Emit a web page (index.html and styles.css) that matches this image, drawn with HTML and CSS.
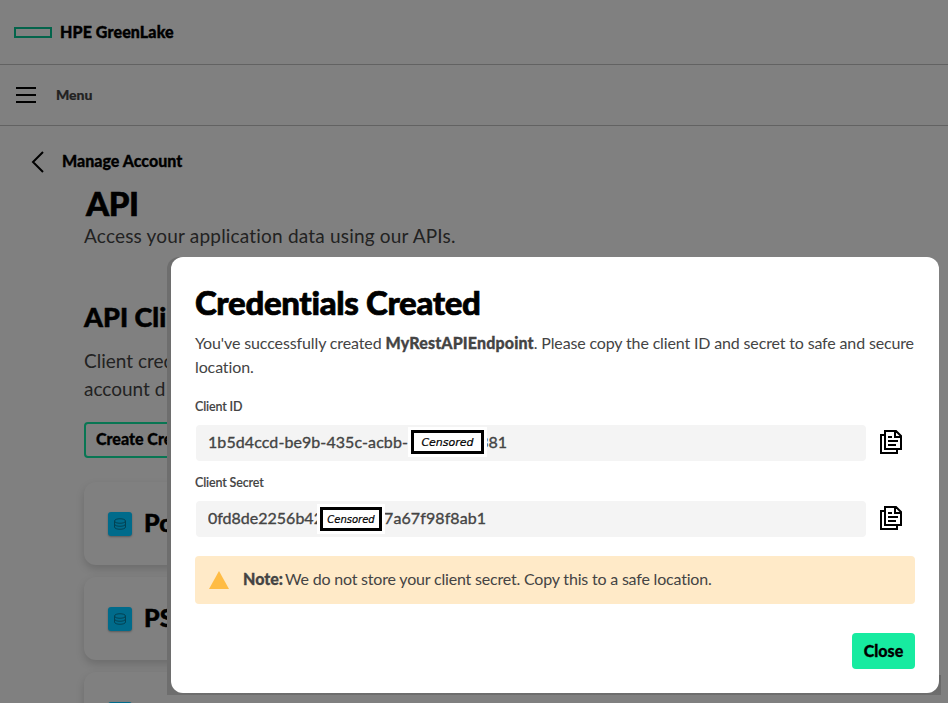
FILE: index.html
```html
<!DOCTYPE html>
<html lang="en">
<head>
<meta charset="utf-8">
<title>HPE GreenLake</title>
<link rel="stylesheet" href="styles.css">
</head>
<body>
<svg width="0" height="0" class="defs">
  <symbol id="copy" viewBox="0 0 22 24"><path d="M5 1h11l5 5v13H5zM15 1v6h6M5 5H1v18h16v-4M8 7h4M8 11h10M8 15h8" fill="none" stroke="#000" stroke-width="2"/></symbol>
  <symbol id="db" viewBox="0 0 24 24"><path d="M6.500 9c0-3 11-3 11 0v6c0 3-11 3-11 0zM6.500 9c0 3 11 3 11 0M6.500 12c0 3 11 3 11 0" fill="none" stroke="#034253" stroke-width="1"/></symbol>
</svg>
<div class="page">
  <header class="brand"><span class="logo"></span><span class="brand-name">HPE GreenLake</span></header>
  <nav class="menu"><span class="burger"><i></i><i></i><i></i></span><span class="menu-label">Menu</span></nav>
  <main>
    <div class="back"><svg width="14" height="22" viewBox="0 0 14 22"><path d="M12 1L2 11l10 10" fill="none" stroke="#000" stroke-width="2"/></svg><span>Manage Account</span></div>
    <h1>API</h1>
    <p class="intro">Access your application data using our APIs.</p>
    <section class="clients">
      <h2>API Cli</h2>
      <p class="desc"><span class="d1">Client cred</span><br><span class="d2">account d</span></p>
      <div class="create">Create Cre</div>
      <div class="card"><span class="tile"><svg width="24" height="24"><use href="#db"/></svg></span><b>Po</b></div>
      <div class="card"><span class="tile"><svg width="24" height="24"><use href="#db"/></svg></span><b>PS</b></div>
      <div class="card"><span class="tile"></span></div>
    </section>
  </main>
</div>
<div class="frame">
  <div class="modal">
    <h2 class="title">Credentials Created</h2>
    <p class="message"><span class="m1">You've successfully created </span><b class="m2">MyRestAPIEndpoint</b><span class="m3">. Please copy the client ID and secret to safe and secure</span><br><span class="m1">location.</span></p>
    <div class="label l1">Client ID</div>
    <div class="row">
      <div class="field"><span class="v1">1b5d4ccd-be9b-435c-acbb-</span><span class="censor c1">Censored</span><span class="v2"><span>381</span></span></div>
      <svg width="22" height="24"><use href="#copy"/></svg>
    </div>
    <div class="label l2">Client Secret</div>
    <div class="row">
      <div class="field"><span class="v3">0fd8de2256b42</span><span class="censor c2">Censored</span><span class="v4">7a67f98f8ab1</span></div>
      <svg width="22" height="24"><use href="#copy"/></svg>
    </div>
    <div class="note"><svg width="20" height="18" viewBox="0 0 20 18"><path d="M10 0l10 18H0z" fill="#ffbc44"/></svg><b>Note:</b><span class="note-text">We do not store your client secret. Copy this to a safe location.</span></div>
    <div class="actions"><button>Close</button></div>
  </div>
</div>
</body>
</html>
```

FILE: styles.css
```css
* { box-sizing: border-box; }
body { margin: 0; width: 948px; height: 703px; overflow: hidden; position: relative; background: #808080; color: #000; font-family: Lato, sans-serif; white-space: nowrap; font-variant-ligatures: none; }
h1, h2, p { margin: 0; }
svg { display: block; flex: none; }
.defs { position: absolute; }
.page { height: 703px; overflow: hidden; }
.brand { height: 65px; border-bottom: 1px solid #626262; padding-left: 14px; display: flex; align-items: center; }
.logo { width: 38px; height: 11px; border: 2px solid #03644b; margin-right: 8px; }
.brand-name { font-size: 16px; font-weight: 900; padding-bottom: 1px; letter-spacing: .12px; -webkit-text-stroke: .4px #000; }
.menu { height: 61px; border-bottom: 1px solid #626262; padding-left: 16px; display: flex; align-items: center; }
.burger { width: 20px; height: 16px; display: flex; flex-direction: column; justify-content: space-between; margin-right: 20px; }
.burger i { height: 2px; background: #000; }
.menu-label { font-size: 14px; font-weight: 900; color: #222; padding-bottom: 1px; -webkit-text-stroke: .2px #222; }
.back { display: flex; align-items: center; height: 22px; margin: 25px 0 0 31px; font-size: 16px; font-weight: 900; -webkit-text-stroke: .3px #000; }
.back span { margin-left: 17px; padding-bottom: 3px; }
h1 { font-size: 33px; line-height: 36px; font-weight: 900; margin: 12px 0 0 86px; -webkit-text-stroke: .6px #000; letter-spacing: -.4px; }
.intro { margin: 1px 0 0 84px; font-size: 19px; line-height: 28px; color: #222; letter-spacing: .19px; }
.clients { width: 167px; padding-left: 84px; overflow: hidden; padding-top: 49px; height: 453px; }
.clients h2 { font-size: 27px; line-height: 36px; font-weight: 900; -webkit-text-stroke: .5px #000; }
.desc { font-size: 19px; line-height: 28px; margin-top: 12px; color: #222; }
.create { width: 150px; height: 36px; margin-top: 19px; border: 2px solid #087653; border-radius: 4px; padding-left: 10px; font-size: 16px; line-height: 30px; font-weight: 900; -webkit-text-stroke: .3px #000; }
.card { width: 700px; height: 83px; border-radius: 12px; margin-bottom: 12px; padding: 0 24px; display: flex; align-items: center; box-shadow: 0 4px 8px rgba(0,0,0,.16); }
.create + .card { margin-top: 24px; }
.card:last-child { align-items: flex-start; padding-top: 30px; }
.tile { width: 24px; height: 24px; border-radius: 3px; background: #006b8b; box-shadow: 0 1px 2px rgba(0,0,0,.3); margin-right: 12px; }
.card b { font-size: 25px; font-weight: 900; line-height: 30px; padding-bottom: 4px; -webkit-text-stroke: .5px #000; }
.frame { position: absolute; left: 167px; top: 257px; width: 774px; height: 438px; padding: 0 2px 2px 4px; background: linear-gradient(#6e6e6e, #6e6e6e) left / 20px 100% no-repeat, linear-gradient(#686868, #6e6e6e) bottom / 100% 20px no-repeat; border-radius: 12px 12px 0 0; }
.modal { width: 768px; height: 436px; background: #fff; border-radius: 12px; padding: 25px 24px 0; color: #444; }
.title { font-size: 33px; line-height: 40px; color: #000; font-weight: 900; letter-spacing: -.35px; -webkit-text-stroke: .7px #000; }
.message { font-size: 16px; line-height: 24px; margin-top: 9px; }
.m1 { letter-spacing: -.12px; }
.m2 { letter-spacing: .14px; }
.m3 { letter-spacing: -.15px; }
b { font-weight: 900; }
.message b, .note b { -webkit-text-stroke: .3px #444; }
.label { font-size: 12.500px; line-height: 16px; margin-top: 20px; font-weight: 600; letter-spacing: -.15px; -webkit-text-stroke: .1px #444; }
.row { display: flex; align-items: center; margin: 10px 0 0 1px; }
.row svg { margin-left: 14px; margin-top: -3px; }
.label.l2 { margin-top: 14px; }
.field { width: 670px; height: 36px; background: #f4f4f4; border-radius: 4px; padding-left: 12px; display: flex; align-items: center; font-size: 16px; -webkit-text-stroke: .35px #444; }
.v1, .v2, .v3, .v4 { padding-bottom: 3px; }
.v1 { width: 200px; letter-spacing: .08px; }
.v3 { width: 109px; overflow: hidden; }
.censor { border: 3px solid #000; background: #fff; color: #000; outline: 3px solid #fff; height: 24px; font: italic 11px/19px "DejaVu Sans", sans-serif; text-align: center; -webkit-text-stroke: .2px #000; z-index: 1; }
.c1 { width: 73px; margin: -2px 0 0 3px; }
.c2 { width: 62px; margin-left: 3px; font-size: 10px; }
.v2 { width: 23px; overflow: hidden; display: flex; justify-content: flex-end; }
.v4 { margin-left: 2px; letter-spacing: .1px; }
.note { height: 48px; margin-top: 19px; border-radius: 4px; background: #ffeac8; display: flex; align-items: center; padding-left: 14px; font-size: 16px; }
.note b { width: 39px; margin: 0 3px 0 14px; padding-bottom: 3px; }
.note-text { letter-spacing: -.19px; padding-bottom: 3px; }
.actions { display: flex; justify-content: flex-end; margin-top: 29px; }
button { width: 63px; height: 36px; padding: 0 0 2px; border: 0; border-radius: 4px; background: #17eba0; color: #000; font: 900 16px Lato, sans-serif; -webkit-text-stroke: .3px #000; }
```
